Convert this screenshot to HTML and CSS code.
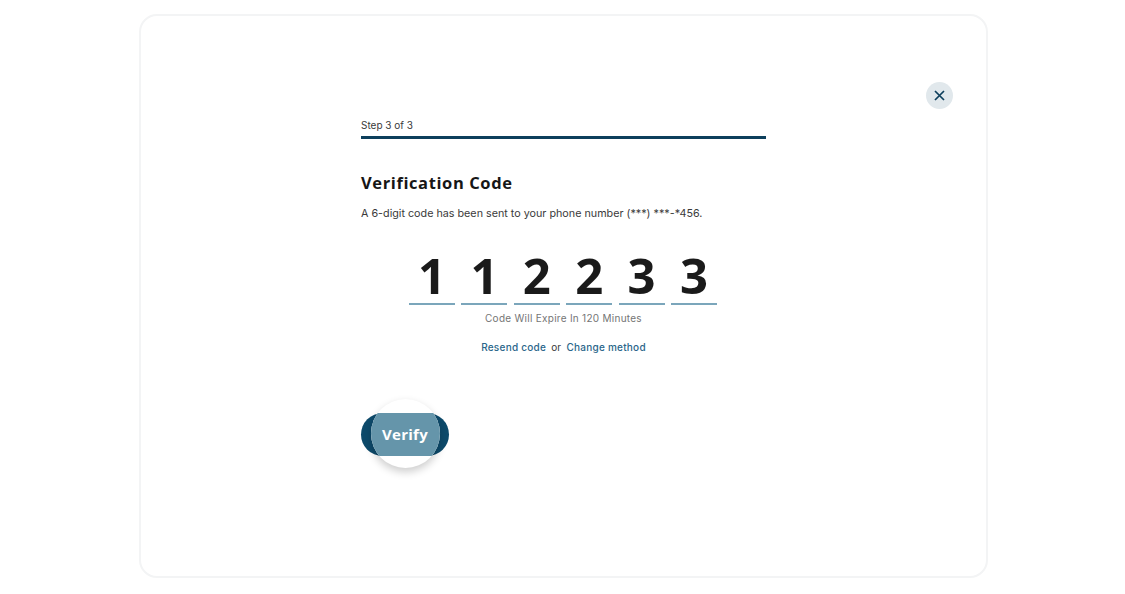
FILE: index.html
```html
<!DOCTYPE html>
<html lang="en">
<head>
    <meta charset="UTF-8">
    <meta name="viewport" content="width=device-width, initial-scale=1.0">
    <title>Verification Code</title>
    <link rel="stylesheet" href="styles.css">
</head>
<body>
    <div class="card">
        <button class="close-button" aria-label="Close">
            <svg width="11" height="11" viewBox="0 0 11 11">
                <path d="M1 1 L10 10 M10 1 L1 10" stroke="#0d3f5c" stroke-width="1.7" fill="none"/>
            </svg>
        </button>
        <div class="content">
            <div class="step">Step 3 of 3</div>
            <div class="progress"></div>
            <h1>Verification Code</h1>
            <p class="intro">A 6-digit code has been sent to your phone number (***) ***-*456.</p>
            <div class="code-row">
                <div class="digit">1</div>
                <div class="digit">1</div>
                <div class="digit">2</div>
                <div class="digit">2</div>
                <div class="digit">3</div>
                <div class="digit">3</div>
            </div>
            <div class="expire">Code Will Expire In 120 Minutes</div>
            <div class="links">
                <a href="#">Resend code</a>
                <span>or</span>
                <a href="#">Change method</a>
            </div>
            <button class="verify-button">
                <span class="spotlight"><span class="spotlight-band"></span></span>
                <span class="verify-label">Verify</span>
            </button>
        </div>
    </div>
</body>
</html>
```

FILE: styles.css
```css
body {
    margin: 0;
    background: #fff;
    font-family: Inter, "Liberation Sans", sans-serif;
    color: #3a3a3a;
}

.card {
    position: relative;
    box-sizing: border-box;
    width: 849px;
    height: 564px;
    margin: 14px 0 0 139px;
    padding: 103px 0 0 220px;
    border: 2px solid #f3f4f5;
    border-radius: 18px;
}

.close-button {
    position: absolute;
    top: 66px;
    left: 785px;
    display: flex;
    align-items: center;
    justify-content: center;
    width: 27px;
    height: 27px;
    padding: 0;
    border: none;
    border-radius: 50%;
    background: #e1e8ec;
}

.content {
    width: 405px;
}

.step {
    font-size: 10px;
    line-height: 12px;
}

.progress {
    height: 3px;
    margin-top: 5px;
    background: #0d3f5c;
}

h1 {
    margin: 32px 0 0;
    font-family: "Open Sans", sans-serif;
    font-size: 16.5px;
    line-height: 24px;
    font-weight: 700;
    letter-spacing: 0.6px;
    color: #161616;
}

.intro {
    margin: 11px 0 0;
    font-size: 10.75px;
    line-height: 16px;
}

.code-row {
    display: flex;
    justify-content: center;
    gap: 6.4px;
    margin-top: 29px;
    padding-right: 1px;
}

.digit {
    width: 46px;
    height: 52px;
    border-bottom: 2px solid #7ba6bb;
    font-family: "Open Sans", sans-serif;
    font-size: 49px;
    line-height: 49px;
    font-weight: 700;
    text-align: center;
    color: #1a1a1a;
}

.expire {
    margin-top: 6px;
    font-size: 10px;
    line-height: 14px;
    letter-spacing: 0.27px;
    text-align: center;
    color: #757575;
}

.links {
    display: flex;
    justify-content: center;
    gap: 5px;
    margin-top: 15px;
    font-size: 10px;
    line-height: 14px;
    letter-spacing: 0.25px;
}

.links a {
    color: #2a668a;
    text-decoration: none;
    font-weight: 500;
}

.verify-button {
    position: relative;
    display: block;
    width: 88px;
    height: 43px;
    margin-top: 59px;
    padding: 0 0 2px;
    border: none;
    border-radius: 22px;
    background: #0d4a6b;
}

.spotlight {
    position: absolute;
    top: -14px;
    left: 10px;
    width: 69px;
    height: 69px;
    overflow: hidden;
    border-radius: 50%;
    background: #fff;
    box-shadow: 0 4px 8px rgba(0, 0, 0, 0.2);
}

.spotlight-band {
    position: absolute;
    top: 14px;
    left: 0;
    width: 100%;
    height: 43px;
    background: #6595aa;
}

.verify-label {
    position: relative;
    font-family: "Open Sans", sans-serif;
    font-size: 15px;
    font-weight: 700;
    letter-spacing: 0.3px;
    color: #fff;
}
```
